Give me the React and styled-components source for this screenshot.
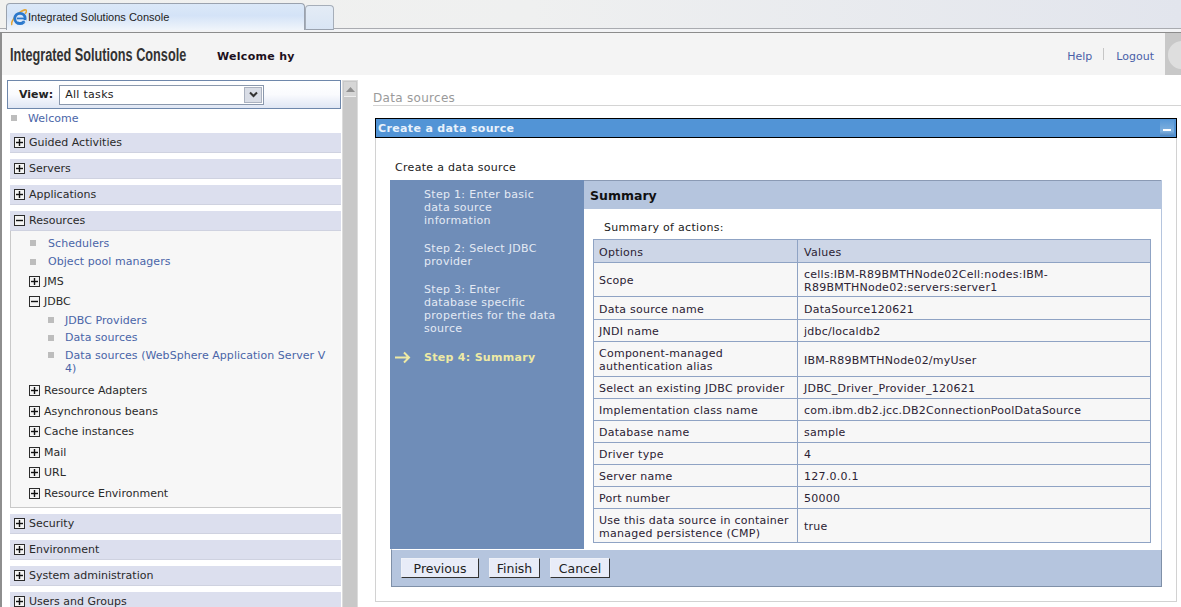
import React from 'react';
import styled, { createGlobalStyle } from 'styled-components';

const GlobalStyle = createGlobalStyle`
  html, body {
    margin: 0;
    padding: 0;
    background: #fff;
    overflow: hidden;
  }
  * { box-sizing: border-box; }
`;

const Page = styled.div`
  width: 1181px;
  height: 607px;
  overflow: hidden;
  font-family: "DejaVu Sans", Verdana, sans-serif;
  font-size: 11px;
  color: #222;
  display: flex;
  flex-direction: column;
`;

const TabStrip = styled.div`
  height: 33px;
  flex: none;
  display: flex;
  align-items: flex-start;
  padding: 3px 0 0 6px;
  background: linear-gradient(90deg, #f1f1ef 0%, #eff0f0 45%, #e2e5ed 100%);
  border-bottom: 1px solid #8c8c8c;
  box-shadow: inset 0 -3px 0 #f2f3f5, inset 0 -4px 0 #a9abb0;
`;

const ActiveTab = styled.div`
  width: 299px;
  height: 27px;
  display: flex;
  align-items: center;
  gap: 1px;
  padding: 0 0 0 4px;
  border: 1px solid #9aa2ae;
  border-bottom: none;
  border-radius: 4px 4px 0 0;
  background: linear-gradient(180deg, #dbe8f8 0%, #d4e3f7 45%, #f0f5fb 100%);
  font-family: "Liberation Sans", Arial, sans-serif;
  font-size: 11px;
  color: #222;
`;

const NewTab = styled.div`
  width: 29px;
  height: 25px;
  margin-top: 2px;
  border: 1px solid #a6aeb9;
  border-bottom-color: #9aa2ae;
  border-radius: 4px 4px 0 0;
  background: linear-gradient(180deg, #e4ecf6, #d9e5f4);
`;

const Frame = styled.div`
  flex: 1;
  min-height: 0;
  display: flex;
  flex-direction: column;
  border-left: 2px solid #8e8e8e;
`;

const Banner = styled.header`
  height: 42px;
  flex: none;
  display: flex;
  align-items: center;
  padding-left: 8px;
  background: #f4f4f4;
`;

const Logo = styled.div`
  width: 207px;
  padding-top: 3px;
  font-family: "Liberation Sans", Arial, sans-serif;
  font-size: 18px;
  font-weight: 700;
  color: #333;
  white-space: nowrap;
  transform: scaleX(0.705);
  transform-origin: left center;
`;

const Welcome = styled.div`
  flex: 1;
  padding-top: 5px;
  font-weight: 700;
  font-size: 11px;
  letter-spacing: 0.3px;
  color: #1c1020;
`;

const BannerLink = styled.a`
  padding-top: 5px;
  color: #4a5fa8;
  font-size: 11px;
  text-decoration: none;
`;

const BannerDivider = styled.span`
  width: 1px;
  height: 12px;
  margin: 0 12px 1px 11px;
  background: #c6c6c6;
`;

const BannerCorner = styled.div`
  position: relative;
  width: 16px;
  height: 100%;
  margin-left: 11px;
  overflow: hidden;
  background: #c8c8c8;

  &::after {
    content: '';
    position: absolute;
    left: 3px;
    top: 8px;
    width: 28px;
    height: 28px;
    border-radius: 50%;
    background: #dedede;
  }
`;

const Body = styled.div`
  flex: 1;
  min-height: 0;
  display: flex;
`;

const NavColumn = styled.nav`
  width: 339px;
  flex: none;
  padding: 5px 0 0 5px;
`;

const ViewBar = styled.div`
  height: 29px;
  display: flex;
  align-items: center;
  gap: 6px;
  padding-left: 11px;
  border: 1px solid #6e87ab;
  background: linear-gradient(180deg, #fff 0%, #fafbfe 50%, #dfe6f4 100%);
  font-weight: 700;
  color: #222;
`;

const ViewSelect = styled.div`
  width: 205px;
  height: 20px;
  display: flex;
  align-items: center;
  justify-content: space-between;
  padding: 0 1px 0 5px;
  border: 1px solid #8a98ad;
  background: #fff;
  font-weight: 400;
  letter-spacing: 0.3px;
`;

const SelectArrow = styled.span`
  width: 18px;
  height: 16px;
  display: flex;
  align-items: center;
  justify-content: center;
  background: #d9dde6;
  border: 1px solid #aab1bf;
`;

const NavInner = styled.div`
  padding-left: 3px;
`;

const Bullet = styled.span`
  width: 6px;
  height: 6px;
  flex: none;
  background: #bdbdbd;
`;

const LeafRow = styled.div`
  height: ${p => p.$height || 18}px;
  display: flex;
  align-items: ${p => (p.$wrap ? 'flex-start' : 'center')};
  padding-top: ${p => (p.$wrap ? 3 : 0)}px;
  padding-left: ${p => p.$indent}px;
  color: #4a65a8;
  letter-spacing: 0.05px;
  line-height: 13px;

  ${Bullet} {
    margin-right: ${p => p.$gap}px;
    margin-top: ${p => (p.$wrap ? 3 : 0)}px;
  }
`;

const SectionHead = styled.div`
  height: 20px;
  margin-top: 6px;
  display: flex;
  align-items: center;
  gap: 4px;
  padding-left: 4px;
  background: #dcdfee;
  border-bottom: 1px solid #cfd2e0;
  color: #2a2a2a;
`;

const SectionBody = styled.div`
  height: 277px;
  padding-top: 3px;
  background: #f7f7f7;
  border-left: 1px solid #c9c9c9;
  border-bottom: 1px solid #c9c9c9;
`;

const GroupRow = styled.div`
  height: ${p => p.$height || 20}px;
  display: flex;
  align-items: center;
  gap: 4px;
  padding-left: 18px;
  color: #2a2a2a;
`;

const ScrollTrack = styled.div`
  width: 16px;
  flex: none;
  margin: 5px 0 0 1px;
  padding: 1px;
  background: #c8c8c8;
  border: 1px solid #dcdcdc;
  border-bottom: none;
`;

const ScrollButton = styled.div`
  height: 15px;
  display: flex;
  align-items: center;
  justify-content: center;
  background: #d6d6d6;
  border-bottom: 1px solid #eee;
`;

const Content = styled.main`
  flex: 1;
  min-width: 0;
  padding: 16px 0 0 15px;
`;

const PageTitle = styled.div`
  height: 15px;
  border-bottom: 1px solid #d4d4d4;
  color: #9a9a9a;
  font-size: 12px;
  line-height: 14px;
  letter-spacing: 0.3px;
`;

const Portlet = styled.section`
  width: 802px;
  height: 484px;
  margin: 12px 0 0 2px;
  border: 1px solid #d2d2d2;
  border-top: none;
`;

const PortletTitle = styled.div`
  height: 20px;
  margin: 0 -1px;
  display: flex;
  align-items: center;
  justify-content: space-between;
  padding: 0 2px;
  border: 1px solid #000;
  background: #5294d6;
  color: #e8f1fb;
  font-weight: 700;
  letter-spacing: 0.35px;
`;

const MinimizeButton = styled.div`
  width: 14px;
  height: 16px;
  display: flex;
  align-items: flex-end;
  justify-content: center;
  padding-bottom: 5px;
  background: linear-gradient(180deg, #5a9ad8, #7fb0de 70%, #4e86c0);

  &::after {
    content: '';
    width: 8px;
    height: 2px;
    background: #fff;
  }
`;

const PortletIntro = styled.div`
  padding: 23px 0 0 19px;
  height: 42px;
  letter-spacing: 0.3px;
  color: #222;
`;

const Wizard = styled.div`
  width: 772px;
  height: 407px;
  margin-left: 14px;
  display: grid;
  grid-template-columns: 194px 1fr;
  grid-template-rows: 369px 38px;
`;

const StepPane = styled.div`
  padding: 8px 0 0 34px;
  background: #6f8db8;
  line-height: 13px;
  letter-spacing: 0.3px;
`;

const Step = styled.div`
  position: relative;
  margin-bottom: 15px;
  margin-top: ${p => (p.$active ? 16 : 0)}px;
  color: ${p => (p.$active ? '#eeeaa4' : '#e4eaf4')};
  font-weight: ${p => (p.$active ? 700 : 400)};
`;

const StepArrow = styled.svg`
  position: absolute;
  left: -30px;
  top: 0;
`;

const SummaryPane = styled.div`
  border-right: 1px solid #b5c5de;
`;

const SummaryTitle = styled.div`
  height: 29px;
  display: flex;
  align-items: center;
  padding-left: 6px;
  background: #b5c5de;
  border-top: 1px solid #8a9ab4;
  font-size: 12.5px;
  font-weight: 700;
  color: #111;
`;

const SummaryIntro = styled.div`
  padding: 12px 0 0 20px;
  height: 30px;
  letter-spacing: 0.3px;
`;

const SummaryTable = styled.table`
  width: 558px;
  margin-left: 9px;
  border-collapse: collapse;
  table-layout: fixed;
  background: #f7f7f7;
  line-height: 13px;
  letter-spacing: 0.25px;
  color: #2b2233;

  th, td {
    padding: 2px 5px 0;
    border: 1px solid #8fa3c4;
    font-weight: 400;
    text-align: left;
  }

  th:nth-child(2), td:nth-child(2) {
    padding-left: 6px;
  }

  th {
    background: #cdd6e7;
    height: 23px;
  }
`;

const SummaryRow = styled.tr`
  td {
    height: ${p => p.$height || 22}px;
  }
`;

const WizardFooter = styled.div`
  grid-column: 1 / -1;
  display: flex;
  align-items: center;
  gap: 10px;
  margin-left: 1px;
  padding-left: 9px;
  background: #b5c5de;
  border: 1px solid #7f90a8;
  border-top: 1px solid #fff;
`;

const WizardButton = styled.button`
  height: 20px;
  width: ${p => p.$width}px;
  padding: 0;
  border: 1px solid;
  border-color: #eef1f8 #333 #333 #eef1f8;
  background: #e8ecf8;
  color: #222;
  font-family: "DejaVu Sans", Verdana, sans-serif;
  font-size: 12.5px;
`;

const Expander = ({ open }) => (
  <svg width="11" height="11" viewBox="0 0 11 11" style={{ flex: 'none' }}>
    <rect x="0.5" y="0.5" width="10" height="10" fill="#f4f4f4" stroke="#2c2c2c" />
    <rect x="2" y="4.8" width="7" height="1.4" fill="#111" />
    {!open && <rect x="4.8" y="2" width="1.4" height="7" fill="#111" />}
  </svg>
);

const IeIcon = () => (
  <svg width="16" height="17" viewBox="0 0 16 17" style={{ flex: 'none' }}>
    <path d="M1 16c-1.2-1.6.8-6.3 5-10.3C10 2 14 .2 15.2 1.2c.8.8-.3 2.6-1.2 3.6" fill="none" stroke="#e3a63a" strokeWidth="1.6" />
    <circle cx="9" cy="9.5" r="5.2" fill="none" stroke="#2a78cc" strokeWidth="2.8" />
    <rect x="6" y="8.6" width="8.4" height="1.7" fill="#2a78cc" />
    <rect x="10" y="11" width="5" height="2.2" fill="#dbe8f8" />
    <path d="M13.8 12.5h-1.6c-.6.8-1.6 1.4-2.9 1.4-1 0-1.8-.3-2.4-.8" fill="none" stroke="#2a78cc" strokeWidth="1.6" />
  </svg>
);

const plainSectionsTop = ['Guided Activities', 'Servers', 'Applications'];
const plainSectionsBottom = ['Security', 'Environment', 'System administration', 'Users and Groups'];

const summaryRows = [
  { label: 'Scope', value: <>cells:IBM-R89BMTHNode02Cell:nodes:IBM-<br />R89BMTHNode02:servers:server1</>, height: 34 },
  { label: 'Data source name', value: 'DataSource120621', height: 23 },
  { label: 'JNDI name', value: 'jdbc/localdb2' },
  { label: <>Component-managed<br />authentication alias</>, value: 'IBM-R89BMTHNode02/myUser', height: 35 },
  { label: 'Select an existing JDBC provider', value: 'JDBC_Driver_Provider_120621' },
  { label: 'Implementation class name', value: 'com.ibm.db2.jcc.DB2ConnectionPoolDataSource' },
  { label: 'Database name', value: 'sample' },
  { label: 'Driver type', value: '4' },
  { label: 'Server name', value: '127.0.0.1' },
  { label: 'Port number', value: '50000' },
  { label: <>Use this data source in container<br />managed persistence (CMP)</>, value: 'true', height: 34 },
];

const App = () => (
  <Page>
    <GlobalStyle />
    <TabStrip>
      <ActiveTab>
        <IeIcon />
        Integrated Solutions Console
      </ActiveTab>
      <NewTab />
    </TabStrip>
    <Frame>
      <Banner>
        <Logo>Integrated Solutions Console</Logo>
        <Welcome>Welcome hy</Welcome>
        <BannerLink href="#">Help</BannerLink>
        <BannerDivider />
        <BannerLink href="#">Logout</BannerLink>
        <BannerCorner />
      </Banner>
      <Body>
        <NavColumn>
          <ViewBar>
            View:
            <ViewSelect>
              All tasks
              <SelectArrow>
                <svg width="9" height="7" viewBox="0 0 9 7">
                  <path d="M1 1.5l3.5 3.5L8 1.5" fill="none" stroke="#333" strokeWidth="2" />
                </svg>
              </SelectArrow>
            </ViewSelect>
          </ViewBar>
          <NavInner>
            <LeafRow $indent={1} $gap={11} $height={18}><Bullet />Welcome</LeafRow>
            {plainSectionsTop.map(name => (
              <SectionHead key={name}><Expander />{name}</SectionHead>
            ))}
            <SectionHead><Expander open />Resources</SectionHead>
            <SectionBody>
              <LeafRow $indent={19} $gap={12}><Bullet />Schedulers</LeafRow>
              <LeafRow $indent={19} $gap={12} $height={19}><Bullet />Object pool managers</LeafRow>
              <GroupRow><Expander />JMS</GroupRow>
              <GroupRow><Expander open />JDBC</GroupRow>
              <LeafRow $indent={37} $gap={11} $height={18}><Bullet />JDBC Providers</LeafRow>
              <LeafRow $indent={37} $gap={11} $height={17}><Bullet />Data sources</LeafRow>
              <LeafRow $indent={37} $gap={11} $height={34} $wrap>
                <Bullet />
                <span>Data sources (WebSphere Application Server V<br />4)</span>
              </LeafRow>
              <GroupRow $height={21}><Expander />Resource Adapters</GroupRow>
              <GroupRow $height={20}><Expander />Asynchronous beans</GroupRow>
              <GroupRow $height={21}><Expander />Cache instances</GroupRow>
              <GroupRow $height={20}><Expander />Mail</GroupRow>
              <GroupRow $height={21}><Expander />URL</GroupRow>
              <GroupRow $height={20}><Expander />Resource Environment</GroupRow>
            </SectionBody>
            {plainSectionsBottom.map(name => (
              <SectionHead key={name}><Expander />{name}</SectionHead>
            ))}
          </NavInner>
        </NavColumn>
        <ScrollTrack>
          <ScrollButton>
            <svg width="9" height="5" viewBox="0 0 9 5"><path d="M4.5 0L9 5H0z" fill="#8f8f8f" /></svg>
          </ScrollButton>
        </ScrollTrack>
        <Content>
          <PageTitle>Data sources</PageTitle>
          <Portlet>
            <PortletTitle>
              Create a data source
              <MinimizeButton />
            </PortletTitle>
            <PortletIntro>Create a data source</PortletIntro>
            <Wizard>
              <StepPane>
                <Step>Step 1: Enter basic<br />data source<br />information</Step>
                <Step>Step 2: Select JDBC<br />provider</Step>
                <Step>Step 3: Enter<br />database specific<br />properties for the data<br />source</Step>
                <Step $active>
                  <StepArrow width="17" height="13" viewBox="0 0 17 13">
                    <path d="M1 6.5h14M10 1.5l5 5-5 5" fill="none" stroke="#eeeaa4" strokeWidth="2" />
                  </StepArrow>
                  Step 4: Summary
                </Step>
              </StepPane>
              <SummaryPane>
                <SummaryTitle>Summary</SummaryTitle>
                <SummaryIntro>Summary of actions:</SummaryIntro>
                <SummaryTable>
                  <colgroup>
                    <col style={{ width: 204 }} />
                    <col />
                  </colgroup>
                  <thead>
                    <tr><th>Options</th><th>Values</th></tr>
                  </thead>
                  <tbody>
                    {summaryRows.map((row, i) => (
                      <SummaryRow key={i} $height={row.height}>
                        <td>{row.label}</td>
                        <td>{row.value}</td>
                      </SummaryRow>
                    ))}
                  </tbody>
                </SummaryTable>
              </SummaryPane>
              <WizardFooter>
                <WizardButton $width={78}>Previous</WizardButton>
                <WizardButton $width={51}>Finish</WizardButton>
                <WizardButton $width={60}>Cancel</WizardButton>
              </WizardFooter>
            </Wizard>
          </Portlet>
        </Content>
      </Body>
    </Frame>
  </Page>
);

export default App;
